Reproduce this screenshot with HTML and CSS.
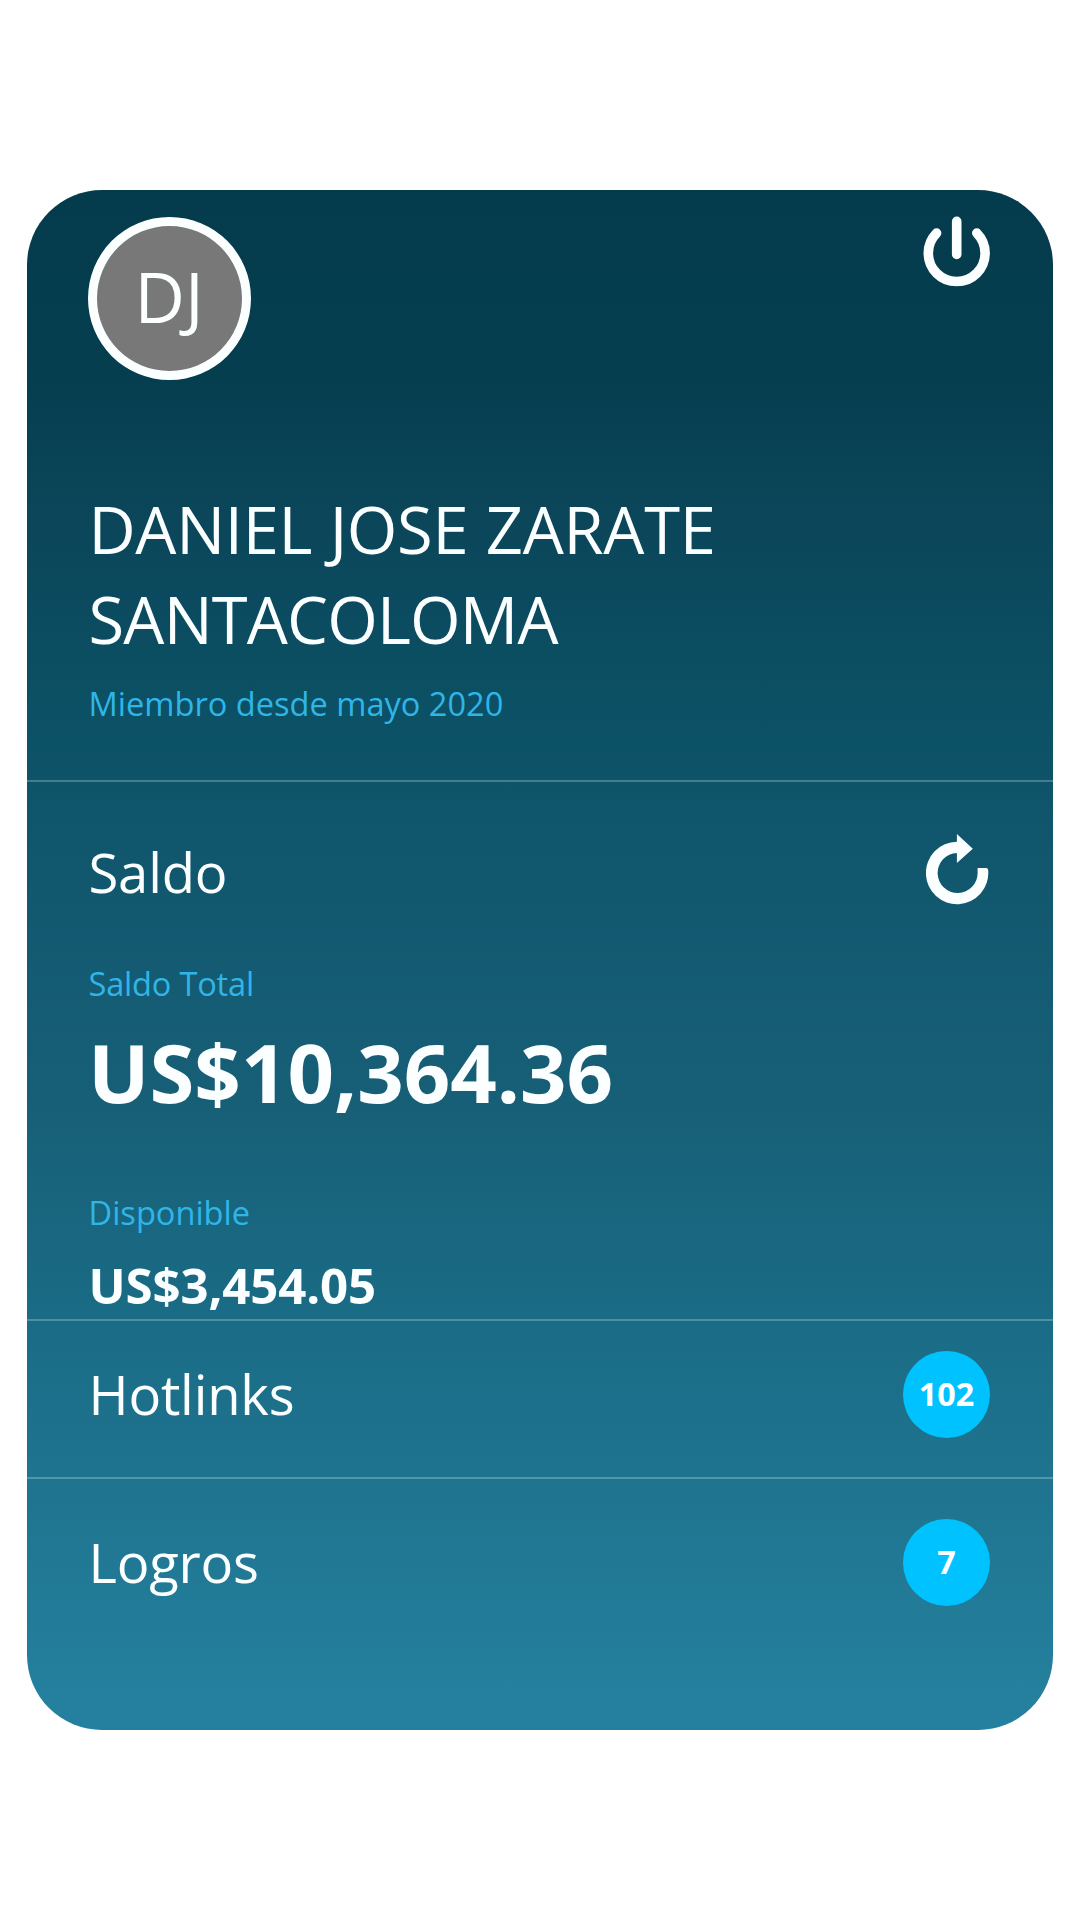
FILE: index.html
```html
<!DOCTYPE html>
<html lang="es">
<head>
<meta charset="utf-8">
<title>Perfil</title>
<link rel="stylesheet" href="styles.css">
</head>
<body>
<main class="card">
  <header class="profile">
    <div class="profile-top">
      <div class="avatar">DJ</div>
      <svg class="icon-power" viewBox="0 0 68 72" fill="none" stroke="currentColor" stroke-width="9.6" stroke-linecap="round">
        <path d="M13.6 17.1A28.4 28.4 0 1 0 53.8 17.1"/>
        <path d="M33.7 5.4V38.4"/>
      </svg>
    </div>
    <h1 class="name"><span class="name-line">DANIEL JOSE ZARATE</span><span class="name-line name-last">SANTACOLOMA</span></h1>
    <p class="label since">Miembro desde mayo 2020</p>
  </header>
  <section class="balance">
    <div class="balance-head">
      <h2 class="title">Saldo</h2>
      <svg class="icon-refresh" viewBox="0 0 64 72">
        <path d="M30.9 7.8A31.2 31.2 0 1 0 62.2 36.5Q62.2 34 60.5 34H51.6V38.5A20 20 0 1 1 30.9 19V29L46.8 14.8L30.9 0Z" fill="currentColor"/>
      </svg>
    </div>
    <p class="label total-label">Saldo Total</p>
    <p class="total">US$10,364.36</p>
    <p class="label available-label">Disponible</p>
    <p class="available">US$3,454.05</p>
  </section>
  <section class="row row-hotlinks">
    <h2 class="title">Hotlinks</h2>
    <span class="badge">102</span>
  </section>
  <section class="row row-logros">
    <h2 class="title">Logros</h2>
    <span class="badge">7</span>
  </section>
</main>
</body>
</html>
```
FILE: styles.css
```css
* { box-sizing: border-box; margin: 0; padding: 0; }

body {
  min-height: 1920px;
  padding: 190px 27px;
  background: #fff;
  color: #fbffff;
  font-family: "Open Sans", "Noto Sans", sans-serif;
}

.card {
  display: flex;
  flex-direction: column;
  height: 1540px;
  border-radius: 75px;
  overflow: hidden;
  background: linear-gradient(180deg, #043c4d 0, #053e4f 190px, #0b465a 330px, #0b5064 510px, #11586f 690px, #175f77 910px, #1a6b85 1120px, #1f7590 1310px, #24809e 1510px, #24809e 1540px);
}

.profile,
.balance,
.row {
  flex: none;
  padding-left: 61px;
  padding-right: 63px;
}

.profile,
.balance,
.row-hotlinks { border-bottom: 2px solid rgba(255, 255, 255, 0.24); }

.profile {
  height: 592px;
  padding-top: 26px;
}

.profile-top,
.balance-head {
  display: flex;
  justify-content: space-between;
  align-items: flex-start;
}

.avatar {
  display: flex;
  align-items: center;
  justify-content: center;
  width: 163px;
  height: 163.5px;
  margin-top: 0.5px;
  padding-right: 1px;
  padding-bottom: 5px;
  border: 9px solid #fbffff;
  border-radius: 50%;
  background: #787878;
  font-size: 69.5px;
  line-height: 100px;
}

.icon-power {
  width: 68px;
  height: 72px;
  margin-right: -1px;
}

.name {
  margin-top: 105px;
  padding-left: 0.5px;
  font-size: 65px;
  font-weight: 370;
  line-height: 89.5px;
  letter-spacing: -0.3px;
  word-spacing: 1px;
}

.name-line { display: block; }

.name-last { letter-spacing: -0.8px; }

.label {
  padding-left: 0.5px;
  color: #30b5e8;
  font-size: 32.6px;
  line-height: 44px;
}

.since { margin-top: 18px; }

.balance {
  height: 539px;
  padding-top: 53px;
}

.balance-head { height: 75px; }

.title {
  padding-left: 0.5px;
  font-size: 54.4px;
  font-weight: 390;
  line-height: 75px;
  letter-spacing: -0.2px;
}

.icon-refresh {
  width: 64px;
  height: 72px;
  margin-top: -1px;
}

.total-label {
  margin-top: 52px;
  letter-spacing: -0.2px;
}

.total {
  margin-top: 11px;
  font-size: 81.4px;
  font-weight: 700;
  line-height: 110px;
}

.available-label { margin-top: 64px; }

.available {
  margin-top: 17px;
  padding-left: 0.5px;
  font-size: 49.2px;
  font-weight: 700;
  line-height: 66px;
  letter-spacing: -0.15px;
}

.row {
  display: flex;
  justify-content: space-between;
  align-items: flex-start;
}

.row-hotlinks {
  height: 158px;
  padding-top: 30px;
}

.row-logros { padding-top: 40px; }

.row .title { margin-top: 6px; }

.badge {
  display: flex;
  align-items: center;
  justify-content: center;
  width: 87px;
  height: 87px;
  padding-bottom: 4px;
  border-radius: 50%;
  background: #00c2ff;
  font-size: 32.3px;
  font-weight: 700;
  line-height: 44px;
}
```
